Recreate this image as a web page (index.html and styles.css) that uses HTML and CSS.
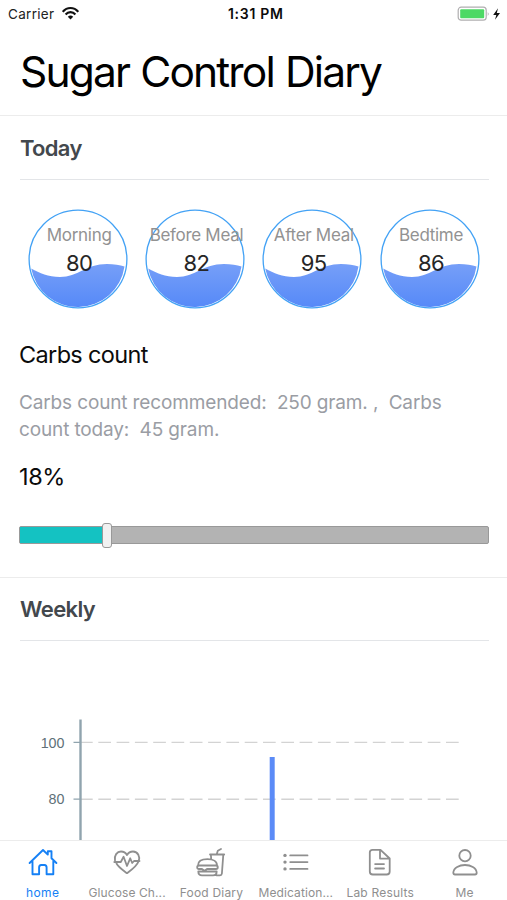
FILE: index.html
```html
<!DOCTYPE html>
<html lang="en">
<head>
<meta charset="utf-8">
<title>Sugar Control Diary</title>
<link rel="stylesheet" href="styles.css">
</head>
<body>
<svg class="defs" width="0" height="0" aria-hidden="true">
  <defs>
    <linearGradient id="water" x1="0" y1="0" x2="0" y2="1"><stop offset="0" stop-color="#769ff8"/><stop offset="1" stop-color="#5689f8"/></linearGradient>
    <symbol id="gauge" viewBox="0 0 100 100">
      <path d="M3.200 59.500C12 64 20 68 32 68C50 68 58 55 79 55C86 55 92 56 96.500 57.500A47.300 47.300 0 0 1 3.200 59.500Z" fill="url(#water)"/>
      <circle cx="50" cy="50" r="48.900" fill="none" stroke="#43a2f5" stroke-width="1.300"/>
    </symbol>
  </defs>
</svg>
<div class="app">
  <div class="status">
    <span class="carrier">Carrier</span>
    <svg class="wifi" width="17" height="13" viewBox="0 0 17 13" fill="none" stroke="#111" stroke-width="2.100"><path d="M.8 4.800C5-.2 12-.2 16.200 4.800M3.600 7.500C6.300 4.300 10.700 4.300 13.400 7.500"/><path d="M8.500 12.500L5.800 9.700Q8.500 7.400 11.200 9.700Z" fill="#111" stroke="none"/></svg>
    <span class="time">1:31 PM</span>
    <svg class="battery" width="46" height="16" viewBox="0 0 46 16"><rect x="1.200" y="1.200" width="28" height="13" rx="3" fill="#fff" stroke="#b0aeb0" stroke-width="1.200"/><rect x="3.200" y="3.200" width="24" height="9" rx="1" fill="#4cd964"/><path d="M30.800 6Q32.500 8 30.800 10Z" fill="#999"/><path d="M41 2.300L36.200 9H39.300L38 13.800L43 6.900H39.800Z" fill="#111"/></svg>
  </div>
  <header class="head"><h1>Sugar Control Diary</h1></header>
  <section class="today">
    <h2 class="w-today">Today</h2>
    <div class="gauges">
      <div class="gauge"><svg><use href="#gauge"/></svg><div class="reading"><span class="label">Morning</span><span class="value">80</span></div></div>
      <div class="gauge"><svg><use href="#gauge"/></svg><div class="reading"><span class="label">Before Meal</span><span class="value">82</span></div></div>
      <div class="gauge"><svg><use href="#gauge"/></svg><div class="reading"><span class="label">After Meal</span><span class="value">95</span></div></div>
      <div class="gauge"><svg><use href="#gauge"/></svg><div class="reading"><span class="label">Bedtime</span><span class="value">86</span></div></div>
    </div>
    <h3>Carbs count</h3>
    <p class="note">Carbs count recommended:&nbsp; 250 gram. ,&nbsp; Carbs<br>count today:&nbsp; 45 gram.</p>
    <div class="percent">18%</div>
    <div class="slider"><div class="fill"></div><div class="thumb"></div></div>
  </section>
  <section class="weekly">
    <h2 class="w-weekly">Weekly</h2>
    <div class="plot">
      <svg width="507" height="199" viewBox="0 641 507 199">
        <g stroke="#d3d3d3" stroke-width="1.400" stroke-dasharray="12.700 5.600"><path d="M80 742.400H460M80 799.200H460"/></g>
        <path d="M73.500 742.400H80M73.500 799.200H80" stroke="#90a4ae" stroke-width="1.300"/>
        <path d="M80.500 719.500V840" stroke="#90a4ae" stroke-width="2.400"/>
        <path d="M272.200 757V840" stroke="#5b8bf7" stroke-width="5"/>
        <g class="ticks" text-anchor="end"><text x="64.500" y="747.800">100</text><text x="64.500" y="804.300">80</text></g>
      </svg>
    </div>
  </section>
  <nav class="tabs">
    <a class="tab active"><svg viewBox="0 0 30 30"><path d="M4.500 14.500V27.200H11.100V20.600Q11.100 18 13.200 18H16.500Q18.600 18 18.600 20.600V27.200H25.300V14.500M1.600 16L15 3L19.800 7.600V4.200H23.500V11.200L28.400 16" stroke-width="1.900"/></svg><span>home</span></a>
    <a class="tab"><svg viewBox="0 0 30 30"><path d="M3 13.500C2 8.500 5 4.500 9 4.500C12 4.500 14 6.200 15 8C16 6.200 18 4.500 21 4.500C26 4.500 28.300 10 26.700 14C24.700 19.600 18.500 23.500 15 26.200C11.500 23.500 6.700 20.500 4.500 16.500M2.300 15H8.800L11.600 9.800L15 19L18.200 11.300L20.200 16L22 14H27.500"/></svg><span class="tight">Glucose Ch...</span></a>
    <a class="tab"><svg viewBox="0 0 30 30"><path d="M2 18.500C2 14 6 12.200 11.500 12.200S21 14 21 18.500ZM3 18.500Q1.200 18.500 1.200 20.300T3 22H6L8.500 23.800L11 22H20Q21.800 22 21.800 20.300T20 18.500M2.300 24.500H20.700Q20.700 28.300 17 28.300H6Q2.300 28.300 2.300 24.500M20.500 28.300H24Q25.700 28.300 25.900 26.500L27.300 7.500H14.800L15.200 11.500M14 7.500H28.200M20.800 7L21.800 3.700L25 2"/></svg><span class="snug">Food Diary</span></a>
    <a class="tab"><svg viewBox="0 0 30 30"><path d="M9.200 8.400H26.500M9.200 15.100H26.500M9.200 21.900H26.500"/><g fill="currentColor" stroke="none"><circle cx="4" cy="8.400" r="1.700"/><circle cx="4" cy="15.100" r="1.700"/><circle cx="4" cy="21.900" r="1.700"/></g></svg><span class="tight">Medication...</span></a>
    <a class="tab"><svg viewBox="0 0 30 30"><path d="M7.500 2.800H15.500L24.700 11.500V24.500Q24.700 27.500 21.700 27.500H7.800Q4.800 27.500 4.800 24.500V5.500Q4.800 2.800 7.500 2.800ZM15 2.800V11.600H24.700M10.100 17.100H19M10.100 21.500H19"/></svg><span class="snug">Lab Results</span></a>
    <a class="tab"><svg viewBox="0 0 30 30"><circle cx="15" cy="8.700" r="5.700"/><path d="M5 27.500Q3.300 27.500 3.300 25.800C3.500 20.500 9.500 18 15 18S26.500 20.500 26.700 25.800Q26.700 27.500 25 27.500Z"/></svg><span>Me</span></a>
  </nav>
</div>
</body>
</html>
```
FILE: styles.css
```css
* { box-sizing: border-box; }
body { margin: 0; background: #fff; color: #0b0b0b; font-family: Inter, "Liberation Sans", sans-serif; }
h1, h2, h3, p { margin: 0; font-weight: 400; white-space: nowrap; }
.defs { position: absolute; }
.app { width: 507px; height: 900px; display: flex; flex-direction: column; overflow: hidden; }
.status { height: 28px; flex: none; display: flex; align-items: center; padding-left: 8px; font-size: 13.5px; line-height: 28px; }
.carrier { width: 47px; letter-spacing: .3px; color: #222; }
.wifi { margin-left: 7px; margin-top: -1px; flex: none; }
.time { margin-left: 149px; width: 56px; font-weight: 600; font-size: 14px; letter-spacing: .7px; white-space: nowrap; }
.battery { margin-left: 173px; margin-top: -1px; flex: none; }
.head { height: 88px; flex: none; border-bottom: 1px solid #ececec; padding-left: 20px; }
h1 { font-size: 42.5px; line-height: 87px; letter-spacing: -1.85px; word-spacing: 1px; color: #000; }
.today { height: 462px; flex: none; display: flex; flex-direction: column; border-bottom: 1px solid #ececec; padding: 0 18px 0 19px; }
h2 { font-size: 22px; font-weight: 600; color: #43484d; line-height: 64px; height: 64px; flex: none; border-bottom: 1px solid #e3e5e8; margin-left: 1px; }
.w-today { letter-spacing: -.7px; }
.w-weekly { letter-spacing: -.6px; }
.gauges { display: grid; grid-template-columns: repeat(4, 117.3px); height: 129px; padding-top: 29px; flex: none; }
.gauge { display: grid; justify-items: center; }
.gauge > * { grid-area: 1 / 1; }
.gauge svg { width: 100px; height: 100px; }
.reading { display: flex; flex-direction: column; align-items: center; padding-top: 14px; padding-left: 3px; white-space: nowrap; }
.label { font-size: 17px; line-height: 25px; letter-spacing: -.3px; color: #929292; }
.value { font-size: 22px; line-height: 31px; letter-spacing: -.6px; color: #262626; }
h3 { font-size: 23.5px; line-height: 34px; letter-spacing: -.65px; margin-top: 29px; }
.note { font-size: 19px; line-height: 27px; letter-spacing: -.14px; margin-top: 17px; color: #9a9da4; }
.percent { font-size: 23.5px; line-height: 34px; letter-spacing: -.4px; margin-top: 17px; }
.slider { height: 18px; margin-top: 32px; background: #b3b3b3; border: 1px solid #999; border-radius: 2px; display: flex; align-items: center; }
.fill { width: 18%; height: 16px; background: #14c2c2; }
.thumb { width: 10px; height: 25px; margin-left: -2px; background: #f1f1f1; border: 1px solid #999; border-radius: 3px; flex: none; }
.weekly { height: 262px; flex: none; }
.weekly h2 { margin: 0 18px 0 20px; height: 63px; line-height: 63px; }
.plot { height: 199px; }
.plot svg { display: block; }
.ticks { fill: #607078; font: 14.3px "Liberation Sans", sans-serif; }
.tabs { height: 60px; flex: none; display: grid; grid-template-columns: repeat(6, 84.4px); padding-left: .5px; border-top: 1px solid #ececec; background: #fff; }
.tab { display: flex; flex-direction: column; align-items: center; color: #8f8f8f; padding-top: 6px; }
.tab svg { width: 30px; height: 30px; fill: none; stroke: currentColor; stroke-width: 1.8; stroke-linecap: round; stroke-linejoin: round; }
.tab span { font-size: 12px; line-height: 17px; margin-top: 7px; letter-spacing: .35px; white-space: nowrap; }
.tab .tight { letter-spacing: .1px; }
.tab .snug { letter-spacing: .2px; }
.tab.active { color: #1580f5; }
```
